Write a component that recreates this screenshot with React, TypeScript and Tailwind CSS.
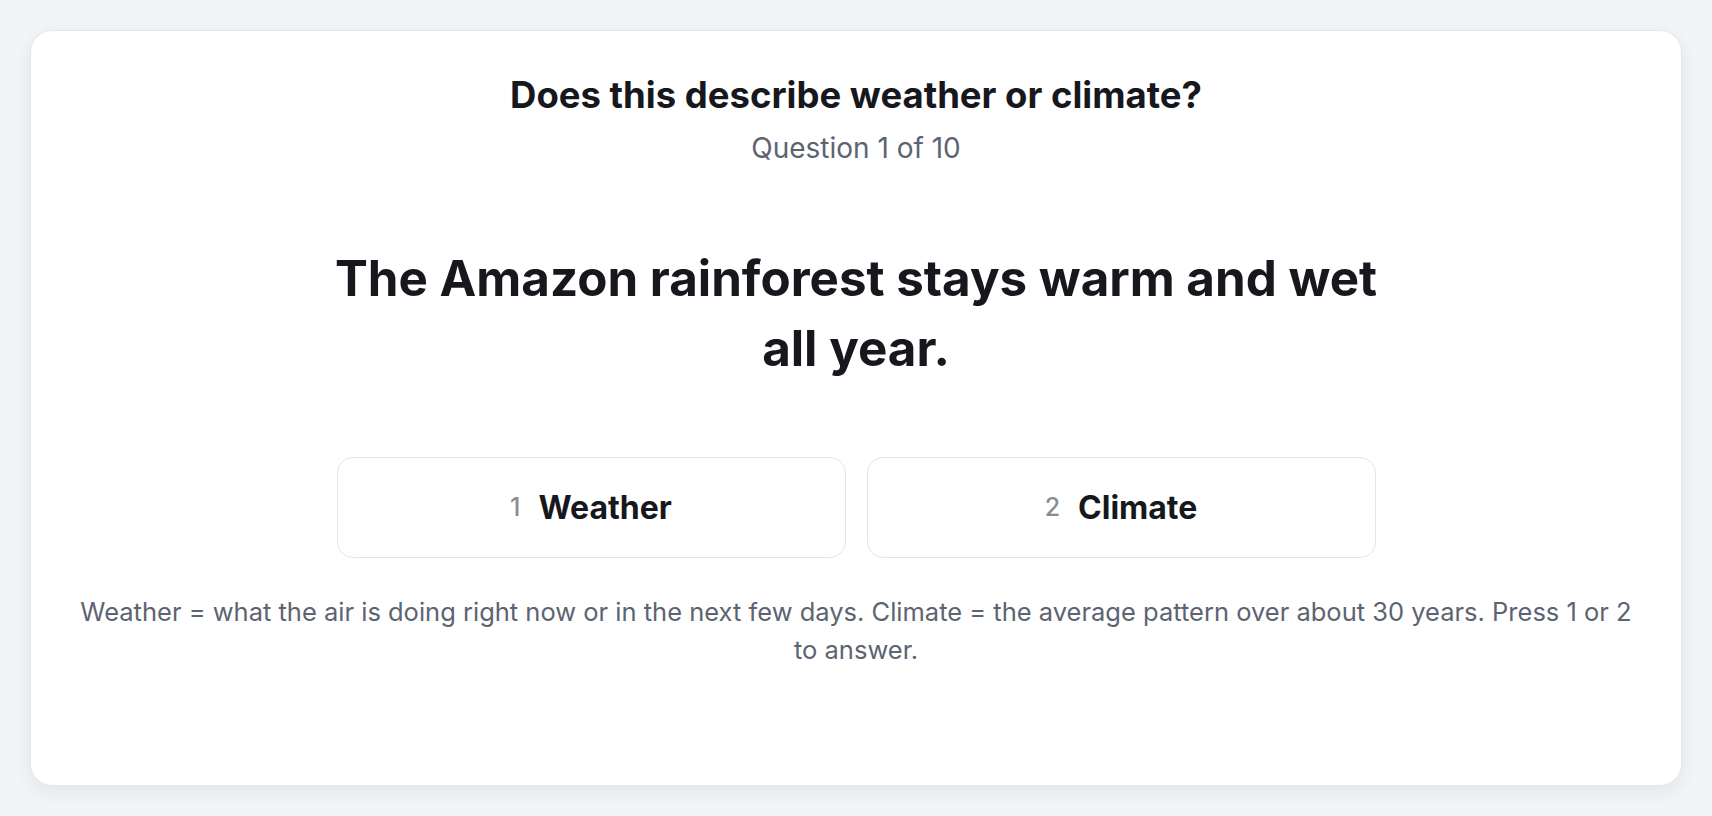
import React from 'react'

const choices = [
  { key: '1', label: 'Weather' },
  { key: '2', label: 'Climate' },
]

export default function App() {
  return (
    <div
      className="min-h-screen bg-[#f3f4f7] p-[30px]"
      style={{ fontFamily: 'Inter, "Noto Sans", sans-serif' }}
    >
      <div className="flex h-[756px] flex-col items-center rounded-[22px] border border-[#e4e6ea] bg-white px-12 pt-[42px] shadow-[0_6px_18px_rgba(15,23,42,0.07)]">
        <h1 className="text-[36.5px] font-bold leading-[44px] text-[#16181d]">
          Does this describe weather or climate?
        </h1>
        <p className="mt-[13px] text-[28px] leading-9 text-[#5d6471]">Question 1 of 10</p>

        <p className="mt-[77px] max-w-[1080px] text-center text-[49.3px] font-bold leading-[70px] text-[#16181d]">
          The Amazon rainforest stays warm and wet all year.
        </p>

        <div className="mt-[74px] grid w-[1039px] grid-cols-2 gap-[21px]">
          {choices.map((c) => (
            <button
              key={c.key}
              type="button"
              className="flex h-[101px] items-center justify-center gap-[18px] rounded-[16px] border-[1.5px] border-[#e2e5e9] bg-white"
            >
              <span className="text-[25px] font-medium text-[#8a8c90]">{c.key}</span>
              <span className="text-[32px] font-bold text-[#16181d]">{c.label}</span>
            </button>
          ))}
        </div>

        <p className="mt-[35px] text-center text-[25.5px] leading-[38px] text-[#5d6471]">
          Weather = what the air is doing right now or in the next few days. Climate = the average pattern over about 30 years. Press 1 or 2 to answer.
        </p>
      </div>
    </div>
  )
}
